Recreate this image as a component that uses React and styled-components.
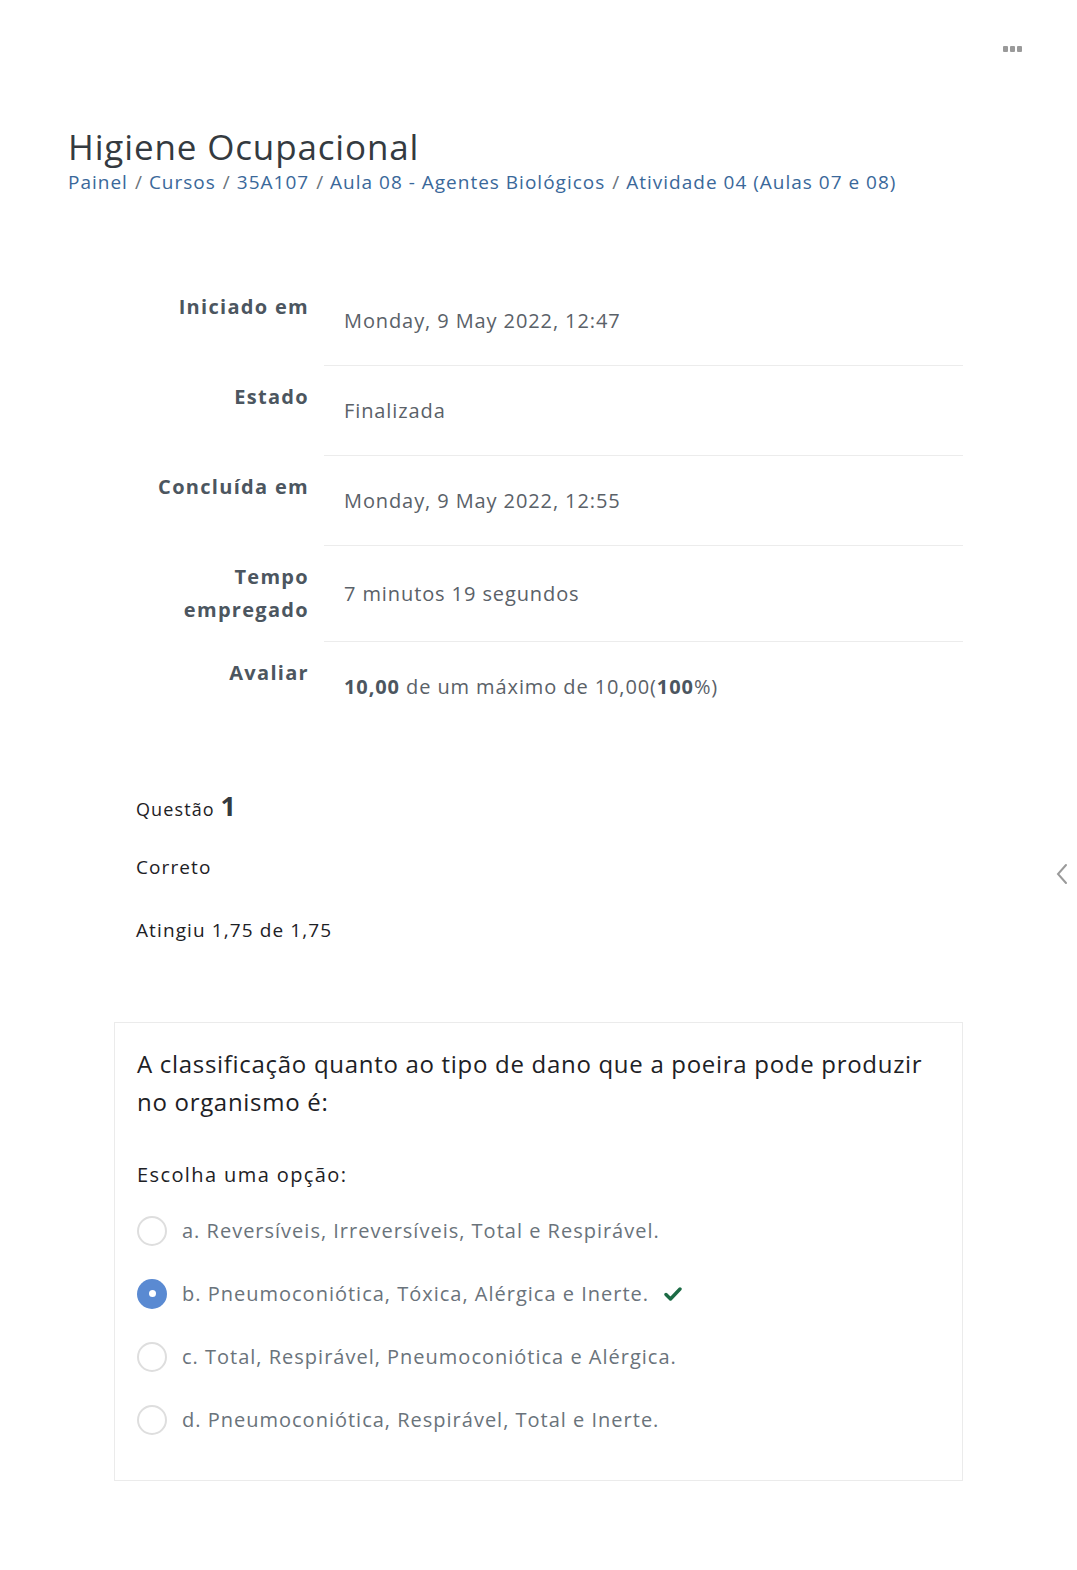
import React from "react";
import styled, { createGlobalStyle } from "styled-components";

const GlobalStyle = createGlobalStyle`
  body {
    margin: 0;
    background: #fff;
    font-family: "Open Sans", "Noto Sans", sans-serif;
    color: #1d2125;
  }
`;

const Page = styled.div`
  position: relative;
  width: 1077px;
  min-height: 1570px;
  box-sizing: border-box;
  padding: 36px 0 0 68px;
`;

const TopBar = styled.div`
  display: flex;
  justify-content: flex-end;
  padding-right: 55px;
  height: 30px;
`;

const Dots = styled.div`
  display: flex;
  gap: 2px;
  margin-top: 10px;
  span {
    width: 5px;
    height: 6px;
    background: #9a9a9a;
    border-radius: 1px;
  }
`;

const Title = styled.h1`
  margin: 60px 0 0;
  font-size: 35px;
  font-weight: 400;
  line-height: 42px;
  letter-spacing: 0.85px;
  color: #343a40;
`;

const Crumbs = styled.nav`
  display: flex;
  font-size: 19px;
  line-height: 28px;
  letter-spacing: 1px;
  color: #6a737b;
`;

const Crumb = styled.a`
  color: #3a689a;
  text-decoration: none;
`;

const Sep = styled.span`
  padding: 0 6px 0 7px;
  color: #6a737b;
`;

const Summary = styled.div`
  margin: 79px 0 0 46px;
  width: 849px;
`;

const Row = styled.div`
  display: grid;
  grid-template-columns: 210px 1fr;
  min-height: 90px;
`;

const Label = styled.div`
  align-self: start;
  padding: 15px 15px 15px 0;
  text-align: right;
  font-weight: 700;
  font-size: 20px;
  line-height: 33px;
  letter-spacing: 1.3px;
  color: #4c5660;
`;

const Value = styled.div`
  display: flex;
  align-items: center;
  padding-left: 20px;
  font-size: 20px;
  letter-spacing: 0.9px;
  color: #5a6168;
  border-top: ${(p) => (p.$first ? "none" : "1px solid #ececec")};
  b {
    color: #4c5660;
  }
`;

const QInfo = styled.div`
  margin: 60px 0 0 68px;
  color: #1d2125;
`;

const QNo = styled.div`
  font-size: 18px;
  line-height: 30px;
  letter-spacing: 1.1px;
  b {
    font-size: 27px;
    font-weight: 700;
    color: #343a40;
  }
`;

const InfoLine = styled.div`
  margin-top: ${(p) => p.$gap}px;
  font-size: 19px;
  line-height: 30px;
  letter-spacing: 1.1px;
`;

const Card = styled.div`
  margin: 77px 0 0 46px;
  width: 849px;
  box-sizing: border-box;
  border: 1px solid #ebebeb;
  padding: 22px 22px 43px;
`;

const QText = styled.div`
  font-size: 24px;
  line-height: 38px;
  letter-spacing: 0.7px;
  color: #1d2125;
`;

const Prompt = styled.div`
  margin-top: 40px;
  font-size: 20px;
  line-height: 28px;
  letter-spacing: 1.4px;
`;

const Options = styled.div`
  display: flex;
  flex-direction: column;
  gap: 28px;
  margin-top: 24px;
`;

const Option = styled.label`
  display: flex;
  align-items: center;
  gap: 15px;
  font-size: 20px;
  line-height: 35px;
  letter-spacing: 1px;
  color: #6a737b;
`;

const Radio = styled.span`
  flex: none;
  width: 30px;
  height: 30px;
  box-sizing: border-box;
  border-radius: 50%;
  border: ${(p) => (p.$checked ? "none" : "2px solid #dedede")};
  background: ${(p) => (p.$checked ? "#5a8ad2" : "#fff")};
  display: flex;
  align-items: center;
  justify-content: center;
  &::after {
    content: "";
    display: ${(p) => (p.$checked ? "block" : "none")};
    width: 7px;
    height: 7px;
    border-radius: 50%;
    background: #fff;
  }
`;

const Check = styled.svg`
  width: 18px;
  height: 16px;
`;

const DrawerToggle = styled.svg`
  position: absolute;
  right: 8px;
  top: 862px;
  width: 14px;
  height: 24px;
`;

const rows = [
  ["Iniciado em", "Monday, 9 May 2022, 12:47"],
  ["Estado", "Finalizada"],
  ["Concluída em", "Monday, 9 May 2022, 12:55"],
  [
    <>
      Tempo
      <br />
      empregado
    </>,
    "7 minutos 19 segundos",
  ],
  [
    "Avaliar",
    <>
      <b>10,00</b>&nbsp;de um máximo de 10,00(<b>100</b>%)
    </>,
  ],
];

const options = [
  "a. Reversíveis, Irreversíveis, Total e Respirável.",
  "b. Pneumoconiótica, Tóxica, Alérgica e Inerte.",
  "c. Total, Respirável, Pneumoconiótica e Alérgica.",
  "d. Pneumoconiótica, Respirável, Total e Inerte.",
];

const crumbs = [
  "Painel",
  "Cursos",
  "35A107",
  "Aula 08 - Agentes Biológicos",
  "Atividade 04 (Aulas 07 e 08)",
];

export default function App() {
  return (
    <Page>
      <GlobalStyle />
      <TopBar>
        <Dots>
          <span />
          <span />
          <span />
        </Dots>
      </TopBar>
      <Title>Higiene Ocupacional</Title>
      <Crumbs>
        {crumbs.map((c, i) => (
          <React.Fragment key={c}>
            {i > 0 && <Sep>/</Sep>}
            <Crumb href="#">{c}</Crumb>
          </React.Fragment>
        ))}
      </Crumbs>

      <Summary>
        {rows.map(([label, value], i) => (
          <Row key={i}>
            <Label>{label}</Label>
            <Value $first={i === 0}>
              <span>{value}</span>
            </Value>
          </Row>
        ))}
      </Summary>

      <QInfo>
        <QNo>
          Questão <b>1</b>
        </QNo>
        <InfoLine $gap={28}>Correto</InfoLine>
        <InfoLine $gap={33}>Atingiu 1,75 de 1,75</InfoLine>
      </QInfo>

      <Card>
        <QText>
          A classificação quanto ao tipo de dano que a poeira pode produzir no
          organismo é:
        </QText>
        <Prompt>Escolha uma opção:</Prompt>
        <Options>
          {options.map((o, i) => (
            <Option key={o}>
              <Radio $checked={i === 1} />
              {o}
              {i === 1 && (
                <Check viewBox="0 0 18 16">
                  <path
                    d="M2 8.5 L6.5 13 L16 3"
                    fill="none"
                    stroke="#1c6b45"
                    strokeWidth="3.4"
                    strokeLinecap="round"
                    strokeLinejoin="round"
                  />
                </Check>
              )}
            </Option>
          ))}
        </Options>
      </Card>

      <DrawerToggle viewBox="0 0 14 24">
        <path
          d="M11 3 L3 12 L11 21"
          fill="none"
          stroke="#9a9a9a"
          strokeWidth="2"
          strokeLinecap="round"
        />
      </DrawerToggle>
    </Page>
  );
}
